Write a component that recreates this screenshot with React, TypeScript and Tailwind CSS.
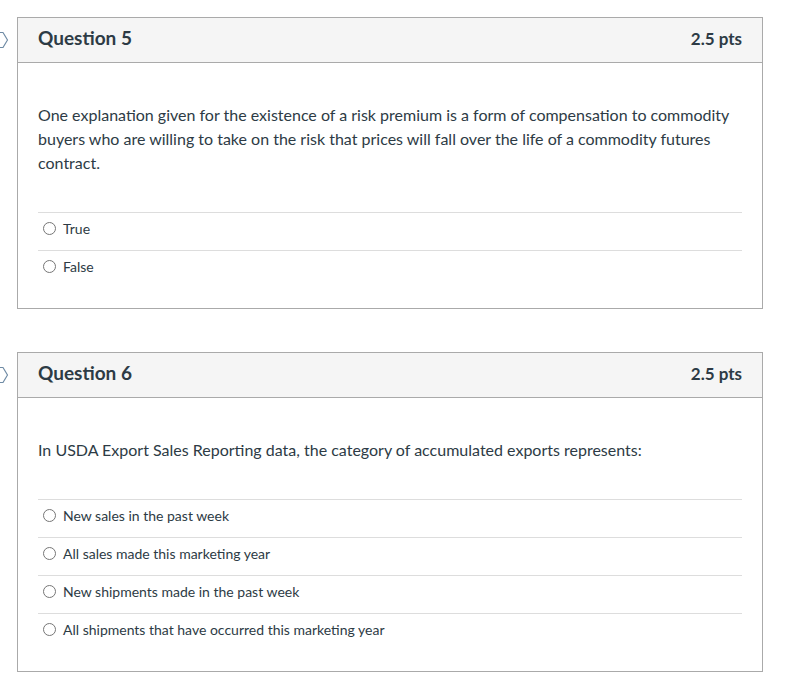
import React from 'react'

type Question = {
  id: number
  points: string
  text: string
  answers: string[]
}

const questions: Question[] = [
  {
    id: 5,
    points: '2.5 pts',
    text: 'One explanation given for the existence of a risk premium is a form of compensation to commodity buyers who are willing to take on the risk that prices will fall over the life of a commodity futures contract.',
    answers: ['True', 'False'],
  },
  {
    id: 6,
    points: '2.5 pts',
    text: 'In USDA Export Sales Reporting data, the category of accumulated exports represents:',
    answers: [
      'New sales in the past week',
      'All sales made this marketing year',
      'New shipments made in the past week',
      'All shipments that have occurred this marketing year',
    ],
  },
]

// question flag, mostly scrolled off the left edge
const FlagIcon = () => (
  <svg width="16" height="18" viewBox="0 0 16 18" className="absolute left-[-23px] top-[13px]">
    <path d="M1 1.5 H8 L12.5 9 L8 16.5 H1" fill="none" stroke="#6f8ba5" strokeWidth="1.2" strokeLinejoin="round" />
  </svg>
)

const QuestionCard = ({ q }: { q: Question }) => (
  <div className="relative w-[746px] border border-[#aaaaaa] bg-white">
    <FlagIcon />
    <div className="flex h-[45px] items-center justify-between border-b border-[#aaaaaa] bg-[#f5f5f5] px-5 pb-[3px]">
      <h2 className="text-[19px] font-bold text-[#2d3b45]">Question {q.id}</h2>
      <span className="text-[17px] font-bold text-[#2d3b45]">{q.points}</span>
    </div>
    <div className="px-5 pb-5 pt-[40px]">
      <p className="text-[16px] leading-6 text-[#2d3b45]">{q.text}</p>
      <div className="mt-[37px]">
        {q.answers.map((a) => (
          <label
            key={a}
            className="flex h-[38px] items-center gap-[7px] border-t border-[#dddddd] pb-[6px] pl-[5px] text-[14px] text-[#2d3b45]"
          >
            <span className="h-[13px] w-[13px] shrink-0 rounded-full border border-[#767676] bg-white" />
            {a}
          </label>
        ))}
      </div>
    </div>
  </div>
)

export default function App() {
  return (
    <div className="min-h-screen bg-white pl-[17px] pt-[17px] font-['Lato',sans-serif]">
      <div className="flex flex-col gap-[43px]">
        {questions.map((q) => (
          <QuestionCard key={q.id} q={q} />
        ))}
      </div>
    </div>
  )
}
